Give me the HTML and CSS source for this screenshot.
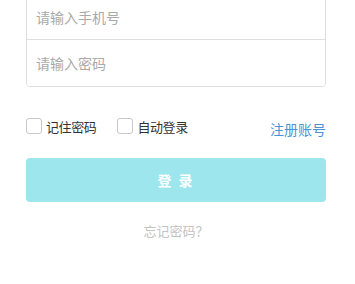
FILE: index.html
```html
<!DOCTYPE html>
<html lang="zh-CN">
<head>
    <meta charset="UTF-8">
    <meta name="viewport" content="width=device-width, initial-scale=1.0">
    <title>登录</title>
    <link rel="stylesheet" href="styles.css">
</head>
<body>
    <div class="container">
        <form id="loginForm">
            <div class="input-box">
                <input type="text" class="field" placeholder="请输入手机号">
                <input type="password" class="field" placeholder="请输入密码">
            </div>

            <div class="options">
                <label class="check"><span class="box"></span>记住密码</label>
                <label class="check"><span class="box"></span>自动登录</label>
                <a href="#" class="register">注册账号</a>
            </div>

            <button type="submit" class="login-btn">登 录</button>
        </form>

        <a href="#" class="forgot">忘记密码？</a>
    </div>
</body>
</html>
```

FILE: styles.css
```css
* {
    margin: 0;
    padding: 0;
    box-sizing: border-box;
    font-family: 'Noto Sans CJK SC', 'Noto Sans', sans-serif;
}

body {
    background: #fff;
}

.container {
    padding: 0 29px 0 26px;
}

.input-box {
    margin-top: -6px;
    border: 1px solid #dedede;
    border-radius: 4px;
    overflow: hidden;
}

.field {
    display: block;
    width: 100%;
    height: 44px;
    padding: 0 9px;
    border: none;
    outline: none;
    font-size: 14px;
    color: #333;
}

.field + .field {
    border-top: 1px solid #dedede;
    height: 47px;
}

.field::placeholder {
    color: #a9a9a9;
}

.options {
    display: flex;
    align-items: center;
    margin-top: 28px;
    height: 22px;
}

.check {
    display: flex;
    align-items: center;
    font-size: 13px;
    letter-spacing: -0.4px;
    color: #333;
    margin-right: 21px;
}

.box {
    width: 16px;
    height: 16px;
    border: 1px solid #c8c8c8;
    border-radius: 3px;
    margin-right: 4px;
}

.register {
    margin-left: auto;
    margin-top: 6px;
    font-size: 14px;
    color: #4a94d6;
    text-decoration: none;
}

.login-btn {
    display: block;
    width: 100%;
    height: 44px;
    margin-top: 21px;
    border: none;
    border-radius: 4px;
    background: #9de6ee;
    color: #fff;
    font-size: 14px;
    font-weight: bold;
    letter-spacing: 2px;
}

.forgot {
    display: block;
    margin-top: 19px;
    text-align: center;
    font-size: 13px;
    color: #c3c3c3;
    text-decoration: none;
}
```
